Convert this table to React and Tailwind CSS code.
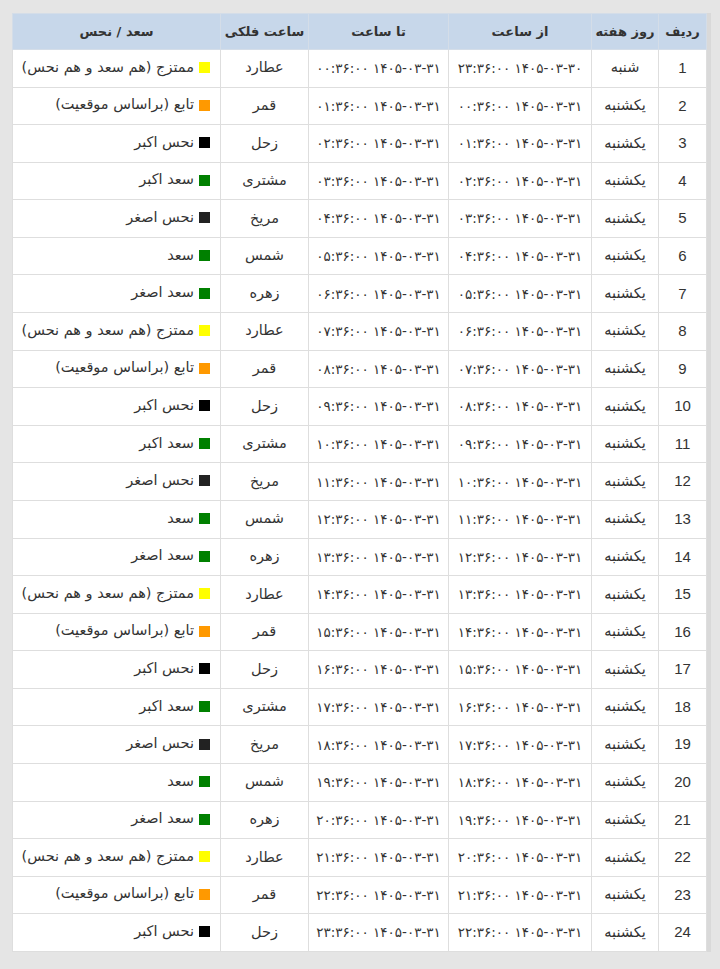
import React from "react";

const FA = "۰۱۲۳۴۵۶۷۸۹";
const fa = (s) => String(s).replace(/[0-9]/g, (d) => FA[+d]);
const pad = (n) => String(n).padStart(2, "0");

const planets = ["عطارد", "قمر", "زحل", "مشتری", "مریخ", "شمس", "زهره"];
const status = {
  "عطارد": { t: "ممتزج (هم سعد و هم نحس)", c: "bg-[#ffff00]" },
  "قمر": { t: "تابع (براساس موقعیت)", c: "bg-[#ff9900]" },
  "زحل": { t: "نحس اکبر", c: "bg-[#000000]" },
  "مشتری": { t: "سعد اکبر", c: "bg-[#008000]" },
  "مریخ": { t: "نحس اصغر", c: "bg-[#222222]" },
  "شمس": { t: "سعد", c: "bg-[#008000]" },
  "زهره": { t: "سعد اصغر", c: "bg-[#008000]" },
};

const rows = Array.from({ length: 24 }, (_, i) => {
  const n = i + 1;
  const fromDate = n === 1 ? "1405-03-30" : "1405-03-31";
  const fromH = n === 1 ? 23 : n - 2;
  const toH = n - 1;
  const p = planets[i % 7];
  return {
    n,
    day: n === 1 ? "شنبه" : "یکشنبه",
    from: fa(`${fromDate} ${pad(fromH)}:36:00`),
    to: fa(`1405-03-31 ${pad(toH)}:36:00`),
    p,
    s: status[p],
  };
});

const cell = "border border-[#dedede] text-center align-middle";
const hcell = "border border-[#d4dde8] text-center align-middle";

export default function App() {
  return (
    <div className="min-h-[969px] w-[720px] bg-[#e5e5e5] pt-[13px] pl-[12px] font-['DejaVu_Sans',sans-serif] text-[#333]">
      <div className="flex">
        <table dir="rtl" className="w-[694px] table-fixed border-collapse bg-white text-[14.5px]">
          <colgroup>
            <col className="w-[48px]" />
            <col className="w-[67px]" />
            <col className="w-[143px]" />
            <col className="w-[140px]" />
            <col className="w-[88px]" />
            <col className="w-[208px]" />
          </colgroup>
          <thead>
            <tr className="h-[36px] bg-[#c7d7ea] text-[13px] font-bold text-[#333]">
              <th className={hcell}>ردیف</th>
              <th className={hcell}>روز هفته</th>
              <th className={hcell}>از ساعت</th>
              <th className={hcell}>تا ساعت</th>
              <th className={hcell}>ساعت فلکی</th>
              <th className={hcell}>سعد / نحس</th>
            </tr>
          </thead>
          <tbody>
            {rows.map((r) => (
              <tr key={r.n} className="h-[37.58px]">
                <td className={cell + " font-['Liberation_Sans',sans-serif] text-[15px]"}>{r.n}</td>
                <td className={cell}>{r.day}</td>
                <td className={cell + " text-[13.5px]"}>{r.from}</td>
                <td className={cell + " text-[13.5px]"}>{r.to}</td>
                <td className={cell}>{r.p}</td>
                <td className="border border-[#dedede] pr-[10px] text-right align-middle">
                  <span className="inline-flex items-center gap-[5px]">
                    <span className={"inline-block h-[11px] w-[11px] " + r.s.c}></span>
                    <span>{r.s.t}</span>
                  </span>
                </td>
              </tr>
            ))}
          </tbody>
        </table>
        <div className="w-[4px] self-stretch bg-[#d9d9d9]"></div>
      </div>
    </div>
  );
}
